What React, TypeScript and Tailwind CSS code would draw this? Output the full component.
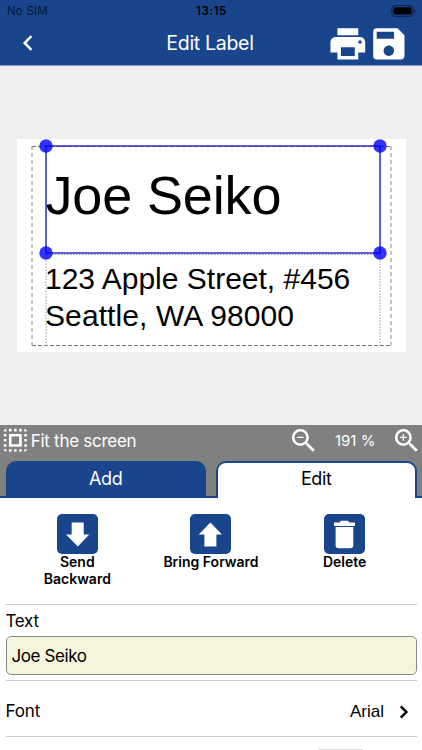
import { useState } from 'react'
import { MdPrint, MdSave, MdSelectAll, MdZoomIn, MdZoomOut } from 'react-icons/md'

function ArrowDownIcon() {
  return (
    <svg viewBox="0 0 41 41" className="size-[41px]" fill="#fff">
      <path d="M14.700 8.500h12v12h5.600L20.800 32.500 9 20.500h5.700z" />
    </svg>
  )
}

function ArrowUpIcon() {
  return (
    <svg viewBox="0 0 41 41" className="size-[41px]" fill="#fff">
      <path d="M14.400 32.500h12v-12h5.600L20.400 8.500 8.700 20.500h5.700z" />
    </svg>
  )
}

function TrashIcon() {
  return (
    <svg viewBox="0 0 41 41" className="size-[41px]" fill="#fff">
      <path d="M10 8.600h5.800c.3-1.200 1-1.800 2-1.800h5.400c1 0 1.700.6 2 1.800H31v3.300H10z" />
      <path d="M11.600 13h17.700v18.200a3 3 0 0 1-3 3H14.600a3 3 0 0 1-3-3z" />
    </svg>
  )
}

const actions = [
  { label: 'Send Backward', icon: <ArrowDownIcon />, width: 'w-[80px]' },
  { label: 'Bring Forward', icon: <ArrowUpIcon />, width: 'w-[120px]' },
  { label: 'Delete', icon: <TrashIcon />, width: 'w-[80px]' },
]

const handles = [
  [29, 7],
  [363, 7],
  [29, 114],
  [363, 114],
]

function StatusBar() {
  return (
    <div className="flex h-5 items-center justify-between pl-[7px] pr-[6px] pt-[3px] text-black">
      <span className="w-[60px] text-[11.500px] tracking-[0.200px] text-[#071634]">No SIM</span>
      <span className="text-[11.500px] font-semibold tracking-[0.600px]">13:15</span>
      <span className="flex w-[60px] justify-end pb-px">
        <svg viewBox="0 0 25 12" className="h-3 w-[25px]">
          <rect x="0.800" y="0.500" width="21.400" height="10.800" rx="3" fill="none" stroke="#0b2147" />
          <rect x="2.500" y="2.300" width="18" height="7.200" rx="1.500" />
          <path d="M23.400 4v4c1.300-.6 1.300-3.400 0-4z" fill="#0b2147" />
        </svg>
      </span>
    </div>
  )
}

function LabelCanvas({ text }: { text: string }) {
  return (
    <div className="flex h-[359px] justify-center bg-[#efefef] pt-[73px]">
      <div className="relative h-[213px] w-[389px] bg-white font-['Liberation_Sans',sans-serif] text-black">
        <p className="absolute left-[29px] top-[25px] whitespace-nowrap text-[54px] leading-[62px] tracking-[-0.150px]">
          {text}
        </p>
        <p className="absolute left-[28.500px] top-[121px] whitespace-nowrap text-[30px] leading-[37.200px]">
          <span className="block">123 Apple Street, #456</span>
          <span className="block tracking-[0.100px]">Seattle, WA 98000</span>
        </p>
        <svg viewBox="0 0 389 213" className="absolute inset-0 h-full w-full" fill="none">
          <path d="M15 7v199.500M374 7v199.500" stroke="#888" strokeDasharray="4 3" />
          <path d="M15 7.500h359M15 206.500h359" stroke="#777" strokeDasharray="4 2" />
          <path d="M29 115.500v91M363 115.500v91M29 115.500h334" stroke="#999" strokeDasharray="1.500 1.500" />
          <rect x="29" y="7" width="334" height="107" stroke="#2d2dc8" strokeWidth="1.500" />
          {handles.map(([x, y]) => (
            <circle key={`${x}-${y}`} cx={x} cy={y} r="6.700" fill="#0000ff" fillOpacity="0.800" />
          ))}
        </svg>
      </div>
    </div>
  )
}

export default function App() {
  const [text, setText] = useState('Joe Seiko')
  const [tab, setTab] = useState('edit')

  return (
    <div className="h-[750px] w-[422px] overflow-hidden bg-white font-[Inter,sans-serif] text-black">
      <header className="h-[66px] border-b border-[#8098c0] bg-[#19458c] text-white">
        <StatusBar />
        <div className="grid h-[46px] grid-cols-[1fr_auto_1fr] items-center">
          <button className="ml-[22px] w-fit">
            <svg viewBox="0 0 12 16" className="h-4 w-3" fill="none" stroke="currentColor" strokeWidth="2.500">
              <path d="M9.400 1.200 2.700 8l6.700 6.800" />
            </svg>
          </button>
          <h1 className="pr-[2px] pt-px text-[19.500px] tracking-[-0.300px]">Edit Label</h1>
          <div className="mr-3 flex justify-end pt-px">
            <MdPrint className="size-[41.700px] shrink-0" />
            <MdSave className="size-[41.700px] shrink-0" />
          </div>
        </div>
      </header>

      <LabelCanvas text={text} />

      <div className="bg-[#808080]">
        <div className="flex h-[36px] items-start text-white">
          <MdSelectAll className="size-[30.700px] shrink-0" />
          <span className="pt-[2px] text-[17px] leading-[28px] tracking-[-0.270px]">Fit the screen</span>
          <MdZoomOut className="ml-auto size-[31.300px] shrink-0" />
          <span className="w-[71px] pt-[2px] text-center text-[15px] leading-[28px]">191 %</span>
          <MdZoomIn className="size-[31.300px] shrink-0" />
        </div>
        <div className="flex h-[37px] border-b-2 border-[#19458c] px-[5.500px] text-[18px] tracking-[-0.350px]">
          <button onClick={() => setTab('add')} className="h-[35px] w-[200.500px] rounded-t-[10px] bg-[#19458c] text-white">
            Add
          </button>
          <button
            onClick={() => setTab('edit')}
            aria-pressed={tab === 'edit'}
            className="ml-[10px] h-[37px] w-[200.500px] rounded-t-[10px] border-2 border-b-0 border-[#19458c] bg-white pb-[5px]"
          >
            Edit
          </button>
        </div>
      </div>

      <div className="grid h-[106px] grid-cols-3 px-[10.500px] pt-[15.500px]">
        {actions.map((action) => (
          <button key={action.label} className="flex flex-col items-center">
            <span className="h-[40.500px] rounded-[5px] bg-[#19458c]">{action.icon}</span>
            <span className={`${action.width} text-[14px] font-semibold leading-[16.500px]`}>{action.label}</span>
          </button>
        ))}
      </div>

      <div className="px-[5.500px]">
        <div className="h-[77px] border-y border-[#ccc]">
          <label htmlFor="text" className="block h-[31px] text-[17px] leading-[32px] tracking-[-0.300px]">
            Text
          </label>
          <input
            id="text"
            value={text}
            onChange={(e) => setText(e.target.value)}
            className="block h-[39px] w-full rounded-[5px] border border-[#888] bg-[#f5f5dc] px-[5px] text-[17px] tracking-[-0.400px] outline-none"
          />
        </div>
        <div className="flex h-[56px] items-center border-b border-[#ccc] pt-[7px] text-[17px] tracking-[-0.100px]">
          <span>Font</span>
          <span className="ml-auto font-['Liberation_Sans',sans-serif] tracking-normal">Arial</span>
          <svg viewBox="0 0 10 14" className="ml-[15px] mr-[7.500px] h-3.5 w-2.5" fill="none" stroke="#000" strokeWidth="2.400">
            <path d="m1.800 1.400 5.600 5.600-5.600 5.600" />
          </svg>
        </div>
        <div className="ml-[312px] mt-[12px] h-8 w-[45px] border-t-2 border-[#ddd]" />
      </div>
    </div>
  )
}
